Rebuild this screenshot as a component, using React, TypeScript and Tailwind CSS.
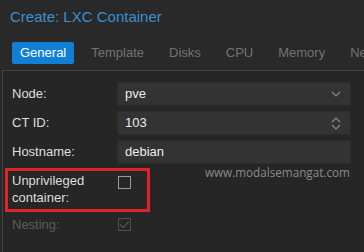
import React from 'react'

const tabs = ['General', 'Template', 'Disks', 'CPU', 'Memory', 'Network']

function ChevronDown() {
  return (
    <svg width="10" height="6" viewBox="0 0 10 6" className="text-[#8a8a8a]">
      <path d="M1 1l4 4 4-4" fill="none" stroke="currentColor" strokeWidth="1.2" />
    </svg>
  )
}

function Spinner() {
  return (
    <svg width="10" height="13" viewBox="0 0 10 13" className="text-[#8a8a8a]">
      <path d="M1 5l4-4 4 4M1 8l4 4 4-4" fill="none" stroke="currentColor" strokeWidth="1.2" />
    </svg>
  )
}

function Field({ label, value, trigger }: { label: string; value: string; trigger?: React.ReactNode }) {
  return (
    <div className="flex items-center">
      <div className="w-[105px] text-[13px] text-[#dedede]">{label}</div>
      <div className="flex h-[24px] w-[234px] items-center justify-between rounded-[2px] border border-[#2c2c2c] bg-[#333333] pl-[7px] pr-[9px] text-[13px] text-[#ececec]">
        <span>{value}</span>
        {trigger}
      </div>
    </div>
  )
}

export default function App() {
  return (
    <div className="relative h-[252px] w-[364px] overflow-hidden bg-[#292929] font-['Liberation_Sans',Arial,sans-serif]">
      <div className="pl-[10px] pt-[8px] text-[15px] leading-[18px] text-[#3b8fd2]">Create: LXC Container</div>

      <div className="mt-[16px] flex gap-[9px] whitespace-nowrap pl-[12px]">
        {tabs.map((t, i) => (
          <div
            key={t}
            className={
              i === 0
                ? 'rounded-[2px] bg-[#127fd6] px-[8px] text-[13px] leading-[22px] text-white'
                : 'px-[8px] text-[13px] leading-[22px] text-[#737373]'
            }
          >
            {t}
          </div>
        ))}
      </div>

      <div className="ml-[2px] mt-[6px] h-[200px] border-l border-t border-[#444444] bg-[#262626] pl-[9px] pt-[11px]">
        <div className="flex flex-col gap-[5px]">
          <Field label="Node:" value="pve" trigger={<ChevronDown />} />
          <Field label="CT ID:" value="103" trigger={<Spinner />} />
          <Field label="Hostname:" value="debian" />
        </div>

        <div className="-ml-[7px] mt-[4px] flex h-[44px] w-[145px] items-start border-[3px] border-[#e0232b] pl-[4px] pt-[1px]">
          <div className="w-[106px] text-[13px] leading-[17px] text-[#dedede]">
            Unprivileged
            <br />
            container:
          </div>
          <div className="mt-[4px] h-[13px] w-[13px] border border-[#9a9a9a]" />
        </div>

        <div className="mt-[4px] flex items-start">
          <div className="w-[106px] text-[13px] leading-[18px] text-[#5c5c5c]">Nesting:</div>
          <div className="mt-[2px] flex h-[13px] w-[13px] items-center justify-center border border-[#505050]">
            <svg width="11" height="9" viewBox="0 0 11 9">
              <path d="M1 4.5l3 3 6-6" fill="none" stroke="#555555" strokeWidth="1.2" />
            </svg>
          </div>
        </div>
      </div>

      <div className="absolute left-[205px] top-[163px] font-['Open_Sans',sans-serif] text-[11.7px] leading-[18px] text-[#8a8a8a]">
        www.modalsemangat.com
      </div>
    </div>
  )
}
